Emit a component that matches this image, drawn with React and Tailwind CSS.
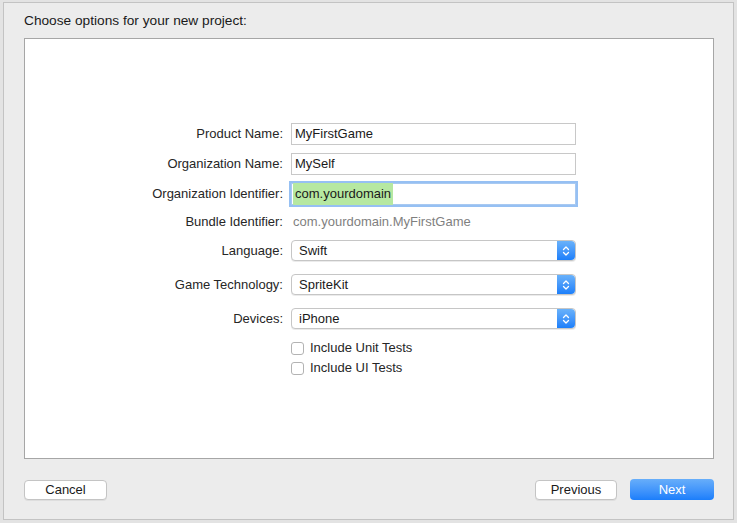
import React from "react";

const font = { fontFamily: '"Liberation Sans", Arial, sans-serif' };

// up/down arrows of the mac popup button
const Stepper = () => (
  <div className="flex h-full w-[18px] items-center justify-center rounded-r-[4px] bg-gradient-to-b from-[#69b1fa] to-[#1b7ffa]">
    <svg width="8" height="12" viewBox="0 0 8 12" fill="none">
      <path d="M1.5 4.5 L4 2 L6.5 4.5" stroke="white" strokeWidth="1.3" strokeLinecap="round" strokeLinejoin="round" />
      <path d="M1.5 7.5 L4 10 L6.5 7.5" stroke="white" strokeWidth="1.3" strokeLinecap="round" strokeLinejoin="round" />
    </svg>
  </div>
);

const Row = ({ label, className = "", children }) => (
  <div className={`flex items-center ${className}`}>
    <div className="mr-2 w-[258px] text-right text-[13px] text-[#262626]">{label}</div>
    {children}
  </div>
);

const TextField = ({ value }) => (
  <div className="flex h-[22px] w-[285px] items-center border border-[#c8c8c8] bg-white px-[3px] text-[13px] text-[#1a1a1a]">
    {value}
  </div>
);

const Popup = ({ value }) => (
  <div className="flex h-[21px] w-[285px] items-center justify-between rounded-[4px] border border-[#c6c6c6] bg-white shadow-[0_1px_0_rgba(0,0,0,0.08)]">
    <span className="pl-[7px] text-[13px] text-[#1a1a1a]">{value}</span>
    <Stepper />
  </div>
);

const Check = ({ label, className = "" }) => (
  <div className={`flex h-5 items-center ${className}`}>
    <div className="ml-[266px] h-[13px] w-[13px] rounded-[3px] border border-[#b3b3b3] bg-white" />
    <span className="ml-[6px] text-[13px] text-[#262626]">{label}</span>
  </div>
);

const Button = ({ children, primary, className = "" }) =>
  primary ? (
    <div className={`flex h-[21px] items-center justify-center rounded-[4px] bg-gradient-to-b from-[#67aefa] to-[#1a7efb] text-[13px] text-white ${className}`}>
      {children}
    </div>
  ) : (
    <div className={`flex h-[20px] items-center justify-center rounded-[4px] border border-[#c4c4c4] bg-white text-[13px] text-[#1a1a1a] shadow-[0_1px_0_rgba(0,0,0,0.06)] ${className}`}>
      {children}
    </div>
  );

export default function App() {
  return (
    <div className="h-[523px] w-[737px] overflow-hidden bg-[#e3e3e3] pl-[3px] pt-[2px]" style={font}>
      <div className="flex h-[518px] w-[731px] flex-col border border-[#c3c3c3] bg-[#ececec] pl-5 pr-[19px]">
        <div className="mt-[10px] h-4 text-[13.7px] leading-4 text-[#1a1a1a]">
          Choose options for your new project:
        </div>

        <div className="mt-[9px] flex h-[421px] flex-col border border-[#a6a6a6] bg-white pt-[84px]">
          <Row label="Product Name:">
            <TextField value="MyFirstGame" />
          </Row>
          <Row label="Organization Name:" className="mt-2">
            <TextField value="MySelf" />
          </Row>
          <Row label="Organization Identifier:" className="mt-2">
            <div className="flex h-[22px] w-[285px] items-center border border-[#a8c9f1] bg-white px-[1px] shadow-[0_0_0_2px_#96c0f3]">
              <span className="bg-[#b6e8a1] px-[2px] py-[1px] text-[13px] text-[#1a1a1a]">com.yourdomain</span>
            </div>
          </Row>
          <Row label="Bundle Identifier:" className="mt-[9px] h-4">
            <span className="pl-[2px] text-[13px] text-[#7f7f7f]">com.yourdomain.MyFirstGame</span>
          </Row>
          <Row label="Language:" className="mt-[10px]">
            <Popup value="Swift" />
          </Row>
          <Row label="Game Technology:" className="mt-[13px]">
            <Popup value="SpriteKit" />
          </Row>
          <Row label="Devices:" className="mt-[13px]">
            <Popup value="iPhone" />
          </Row>
          <Check label="Include Unit Tests" className="mt-[9px]" />
          <Check label="Include UI Tests" />
        </div>

        <div className="mt-[20px] flex items-center">
          <Button className="w-[83px]">Cancel</Button>
          <div className="flex-1" />
          <Button className="w-[82px]">Previous</Button>
          <Button primary className="ml-[13px] w-[84px]">Next</Button>
        </div>
      </div>
    </div>
  );
}
